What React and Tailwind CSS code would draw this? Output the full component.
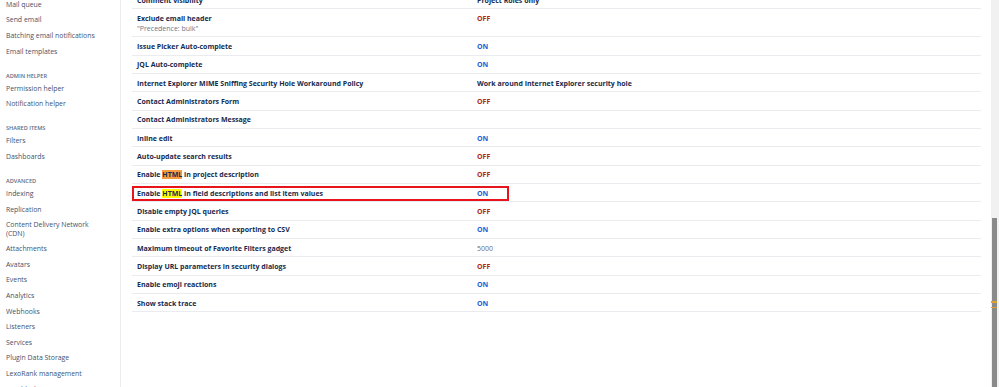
const sidebar = [
  { type: 'item', label: 'Mail queue' },
  { type: 'item', label: 'Send email' },
  { type: 'item', label: 'Batching email notifications' },
  { type: 'item', label: 'Email templates' },
  { type: 'heading', label: 'Admin helper' },
  { type: 'item', label: 'Permission helper' },
  { type: 'item', label: 'Notification helper' },
  { type: 'heading', label: 'Shared items' },
  { type: 'item', label: 'Filters' },
  { type: 'item', label: 'Dashboards' },
  { type: 'heading', label: 'Advanced' },
  { type: 'item', label: 'Indexing' },
  { type: 'item', label: 'Replication' },
  { type: 'item', label: 'Content Delivery Network', second: '(CDN)' },
  { type: 'item', label: 'Attachments' },
  { type: 'item', label: 'Avatars' },
  { type: 'item', label: 'Events' },
  { type: 'item', label: 'Analytics' },
  { type: 'item', label: 'Webhooks' },
  { type: 'item', label: 'Listeners' },
  { type: 'item', label: 'Services' },
  { type: 'item', label: 'Plugin Data Storage' },
  { type: 'item', label: 'LexoRank management' },
  { type: 'item', label: 'Troubleshooting' },
]

const rows = [
  { label: 'Comment visibility', value: 'Project Roles only', kind: 'text' },
  { label: 'Exclude email header', desc: '"Precedence: bulk"', value: 'OFF', kind: 'off' },
  { label: 'Issue Picker Auto-complete', value: 'ON', kind: 'on' },
  { label: 'JQL Auto-complete', value: 'ON', kind: 'on' },
  { label: 'Internet Explorer MIME Sniffing Security Hole Workaround Policy', value: 'Work around Internet Explorer security hole', kind: 'text' },
  { label: 'Contact Administrators Form', value: 'OFF', kind: 'off' },
  { label: 'Contact Administrators Message', value: '', kind: 'text' },
  { label: 'Inline edit', value: 'ON', kind: 'on' },
  { label: 'Auto-update search results', value: 'OFF', kind: 'off' },
  { label: 'project description', html: 'active', value: 'OFF', kind: 'off' },
  { label: 'field descriptions and list item values', html: 'match', value: 'ON', kind: 'on', boxed: true },
  { label: 'Disable empty JQL queries', value: 'OFF', kind: 'off' },
  { label: 'Enable extra options when exporting to CSV', value: 'ON', kind: 'on' },
  { label: 'Maximum timeout of Favorite Filters gadget', value: '5000', kind: 'plain' },
  { label: 'Display URL parameters in security dialogs', value: 'OFF', kind: 'off' },
  { label: 'Enable emoji reactions', value: 'ON', kind: 'on' },
  { label: 'Show stack trace', value: 'ON', kind: 'on' },
]

const valueClass = {
  on: 'font-bold text-[#1d5fd6]',
  off: 'font-bold text-[#b32a12]',
  text: 'font-bold text-[#172b4d]',
  plain: 'text-[#6b6f78]',
}

const Label = ({ row }) => {
  if (!row.html) return row.label
  return (
    <>
      Enable{' '}
      <span className={row.html === 'active' ? 'bg-[#f59b42]' : 'bg-[#ffff00]'}>HTML</span>{' '}
      in {row.label}
    </>
  )
}

const App = () => {
  return (
    <div
      className="flex h-[387px] w-[999px] overflow-hidden bg-white text-[7px]"
      style={{ fontFamily: '"Open Sans", "Noto Sans", sans-serif' }}
    >
      <aside className="w-[121px] shrink-0 border-r border-[#ebecf0] pl-[6px] text-[6.9px]">
        <div className="-mt-[2.8px]">
          {sidebar.map((entry, i) =>
            entry.type === 'heading' ? (
              <div
                key={i}
                className="pt-[12px] pb-[1.5px] text-[5.6px] font-semibold uppercase leading-[8px] text-[#5e6c84]"
              >
                {entry.label}
              </div>
            ) : (
              <div key={i} className="py-[3.55px] leading-[8.5px] text-[#42526e]">
                {entry.label}
                {entry.second && (
                  <>
                    <br />
                    {entry.second}
                  </>
                )}
              </div>
            )
          )}
        </div>
      </aside>

      <main className="flex-1 pl-[11px] pr-[10px]">
        <div className="-mt-[9px]">
          {rows.map((row, i) => (
            <div
              key={i}
              className={`relative grid grid-cols-[340px_1fr] border-b border-[#ebecf0] ${
                row.desc ? 'h-[28px] pt-[5px]' : 'h-[18.33px] items-center pt-[2px]'
              }`}
            >
              <div className="pl-[5px] leading-[10px]">
                <div className="font-bold text-[#172b4d]">
                  <Label row={row} />
                </div>
                {row.desc && <div className="text-[#6b778c]">{row.desc}</div>}
              </div>
              <div className={`pl-[5px] leading-[10px] ${valueClass[row.kind]}`}>{row.value}</div>
              {row.boxed && (
                <div className="absolute left-0 top-[1.7px] h-[15px] w-[377px] border-2 border-[#e8141b]" />
              )}
            </div>
          ))}
        </div>
      </main>

      <div className="relative w-[8px] shrink-0 bg-[#f1f1f1]">
        <div className="absolute left-[1px] top-[218px] bottom-0 w-[5px] bg-[#8a8a8a]" />
        <div className="absolute left-0 top-[301px] h-[1.5px] w-[6px] bg-[#e0a030]" />
        <div className="absolute left-0 top-[306.5px] h-[1.5px] w-[6px] bg-[#e0a030]" />
      </div>
    </div>
  )
}

export default App
